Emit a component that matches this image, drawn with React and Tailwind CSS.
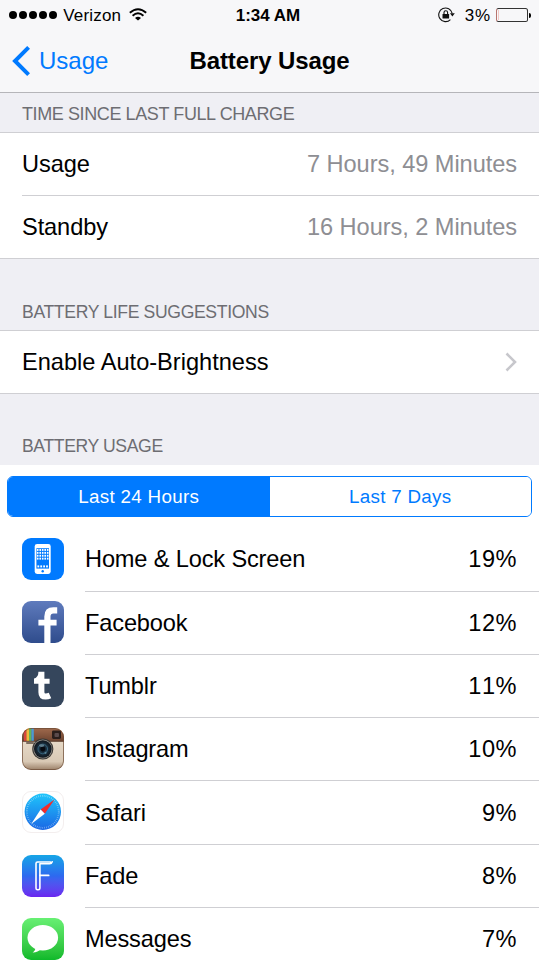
import React, { useState } from "react";

const TILE = "flex w-[42px] h-[42px] shrink-0 overflow-hidden rounded-[9px]";

const HomeIcon = () => (
    <div className={`${TILE} bg-[#007aff]`}>
        <svg viewBox="0 0 42 42" className="w-full h-full">
            <rect x="12.7" y="6" width="16" height="30" rx="2.4" fill="#fff" />
            <rect x="14.4" y="10.2" width="12.6" height="20.4" fill="#007aff" />
            {[0, 1, 2, 3].map((row) =>
                [0, 1, 2, 3, 4].map((col) => (
                    <rect key={`${row}-${col}`} x={14.9 + col * 2.5} y={11 + row * 2.9} width="1.6" height="1.9" fill="#fff" />
                ))
            )}
            {[0, 1, 2, 3].map((col) => (
                <rect key={col} x={15.4 + col * 2.9} y="27.4" width="1.8" height="2" fill="#fff" />
            ))}
            <circle cx="20.7" cy="33.2" r="1.2" fill="#007aff" />
        </svg>
    </div>
);

const FacebookIcon = () => (
    <div className={`${TILE} bg-linear-to-b from-[#5f7bbd] to-[#2f4c8c]`}>
        <svg viewBox="0 0 42 42" className="w-full h-full" fill="none" stroke="#fff" strokeWidth="6.2">
            <path d="M25.4 42V15.6Q25.4 9.4 31.4 9.4H35.2" />
            <path d="M16.4 21.6H34.6" strokeWidth="5.8" />
        </svg>
    </div>
);

const TumblrIcon = () => (
    <div className={`${TILE} bg-[#35465c]`}>
        <svg viewBox="0 0 42 42" className="w-full h-full" fill="none" stroke="#fff" strokeWidth="6">
            <path d="M19.4 6.8V27.2Q19.4 31.6 23.6 31.6 25.8 31.6 28 30.6" />
            <path d="M12 16.3H27.6" strokeWidth="5" />
            <path d="M17 6.8Q16.4 12 12 13.8V16H20Z" fill="#fff" stroke="none" />
        </svg>
    </div>
);

const InstagramIcon = () => (
    <div className={TILE}>
        <svg viewBox="0 0 42 42" className="w-full h-full">
            <defs>
                <linearGradient id="igLeather" x1="0" y1="0" x2="0" y2="1">
                    <stop offset="0" stopColor="#a06a4d" />
                    <stop offset="1" stopColor="#6f4531" />
                </linearGradient>
                <linearGradient id="igBody" x1="0" y1="0" x2="0" y2="1">
                    <stop offset="0" stopColor="#eee3d2" />
                    <stop offset=".8" stopColor="#d9c9b5" />
                    <stop offset="1" stopColor="#9b8068" />
                </linearGradient>
                <radialGradient id="igLens">
                    <stop offset="0" stopColor="#0a0f18" />
                    <stop offset=".45" stopColor="#1c3445" />
                    <stop offset="1" stopColor="#10151c" />
                </radialGradient>
            </defs>
            <rect width="42" height="42" fill="url(#igBody)" />
            <rect width="42" height="13" fill="url(#igLeather)" />
            <rect x="2" width="2.5" height="13" fill="#d9443c" />
            <rect x="4.5" width="2.5" height="13" fill="#f0b83a" />
            <rect x="7" width="2.4" height="13" fill="#62b656" />
            <rect x="9.4" width="2.4" height="13" fill="#4a9bd4" />
            <rect y="12.8" width="42" height="1" fill="#5d3e2d" />
            <rect x="4" y="14.2" width="8" height="1.6" rx=".8" fill="#5a4a3e" />
            <rect x="30" y="2.6" width="9" height="8.4" rx="1.4" fill="#2a1e1b" />
            <rect x="32.5" y="5" width="4.5" height="4" rx="1" fill="#5a4a4b" />
            <circle cx="20.8" cy="21" r="10.6" fill="#3a3835" />
            <circle cx="20.8" cy="21" r="9.5" fill="#96928b" />
            <circle cx="20.8" cy="21" r="8.8" fill="url(#igLens)" />
            <circle cx="20.8" cy="21" r="4.8" fill="none" stroke="#35617a" strokeWidth="1" />
            <circle cx="20.8" cy="21" r="2.4" fill="#06090f" />
            <ellipse cx="19.6" cy="17.6" rx="2.7" ry="1.3" fill="#5f7c8b" />
            <circle cx="23.5" cy="24.8" r="1.1" fill="#557f93" />
            <rect x=".5" y=".5" width="41" height="41" rx="8.5" fill="none" stroke="#6b4a35" strokeOpacity=".7" />
        </svg>
    </div>
);

const SafariIcon = () => (
    <div className={`${TILE} border border-[#f3eeee] bg-white`}>
        <svg viewBox="1 1 40 40" className="w-full h-full">
            <defs>
                <linearGradient id="safariDial" x1="0" y1="0" x2="0" y2="1">
                    <stop offset="0" stopColor="#1fc5fb" />
                    <stop offset="1" stopColor="#1a67e5" />
                </linearGradient>
            </defs>
            <circle cx="20.8" cy="20.8" r="18.2" fill="url(#safariDial)" />
            <circle cx="20.8" cy="20.8" r="16" fill="none" stroke="#fff" strokeOpacity=".5" strokeWidth="1.8" strokeDasharray=".6 1.3" />
            <path d="M32.5 8.5 18.6 18.6 22.8 22.8Z" fill="#f02c2c" />
            <path d="M9.2 33 18.6 18.6 22.8 22.8Z" fill="#fff" />
        </svg>
    </div>
);

const FadeIcon = () => (
    <div className={`${TILE} bg-linear-to-b from-[#16a5e6] via-[#2d69ef] to-[#6a24f0]`}>
        <svg viewBox="0 0 42 42" className="w-full h-full" fill="none" stroke="#fff" strokeWidth="1.6" strokeLinejoin="round" strokeLinecap="round">
            <path d="M30.2 6.8Q29.6 8.8 27.6 8.8H17.9V33.2Q17.9 34.8 16.2 34.8H15.6Q14 34.8 14 33.2V8.4Q14 7 15.6 7H28.4" />
            <path d="M18 20.4H26.6" strokeWidth="1.9" />
        </svg>
    </div>
);

const MessagesIcon = () => (
    <div className={`${TILE} bg-linear-to-b from-[#67f073] to-[#0cb92a]`}>
        <svg viewBox="0 0 42 42" className="w-full h-full">
            <ellipse cx="20.8" cy="19.7" rx="15.3" ry="12.7" fill="#fff" />
            <path d="M13.5 29C13.6 31.5 12.6 33.4 10.6 34.5 14 34.6 17 33.3 18.8 31Z" fill="#fff" />
        </svg>
    </div>
);

const apps = [
    { name: "Home & Lock Screen", percent: 19, Icon: HomeIcon },
    { name: "Facebook", percent: 12, Icon: FacebookIcon },
    { name: "Tumblr", percent: 11, Icon: TumblrIcon },
    { name: "Instagram", percent: 10, Icon: InstagramIcon },
    { name: "Safari", percent: 9, Icon: SafariIcon },
    { name: "Fade", percent: 8, Icon: FadeIcon },
    { name: "Messages", percent: 7, Icon: MessagesIcon },
];

const StatusBar = () => (
    <div className="flex items-center justify-between h-[30px] pl-[9px] pr-[8px] text-[17px] leading-none">
        <div className="flex flex-1 items-center">
            <div className="flex gap-[1.8px]">
                {[0, 1, 2, 3, 4].map((dot) => (
                    <span key={dot} className="w-[8.2px] h-[8.2px] rounded-full bg-black" />
                ))}
            </div>
            <span className="ml-[6px] tracking-[0.2px]">Verizon</span>
            <svg viewBox="0 0 18 13" className="w-[18px] h-[13px] ml-[8px] -mt-px" fill="none" stroke="#000" strokeWidth="1.9">
                <path d="M.8 4.8Q9-2.4 17.2 4.8" />
                <path d="M3.6 7.7Q9 3 14.4 7.7" />
                <path d="M9 12.6 6 9.9Q9 7.6 12 9.9Z" fill="#000" stroke="none" />
            </svg>
        </div>
        <span className="mr-[4px] font-bold">1:34 AM</span>
        <div className="flex flex-1 items-center justify-end">
            <svg viewBox="0 0 17 16" className="w-[17px] h-[16px] mr-px" fill="none" stroke="#111" strokeWidth="1.1">
                <path d="M14.2 6.4A6.8 6.8 0 1 0 12.4 12.6" />
                <path d="M11.9 6.3H16.8L14.4 9.4Z" fill="#111" stroke="none" />
                <rect x="4.5" y="6.9" width="6.6" height="4.7" rx=".5" fill="#111" stroke="none" />
                <path d="M6 7.2V5.5a1.8 1.8 0 0 1 3.6 0V7.2" />
            </svg>
            <span className="ml-[9px] tracking-[0.6px]">3%</span>
            <div className="flex w-[32px] h-[14px] ml-[5.4px] rounded-[2.5px] border border-[#333] border-l-[#b8756f] p-px">
                <span className="w-px bg-[#f3c9c5]" />
            </div>
            <span className="w-[2px] h-[5px] ml-px rounded-r-full bg-black" />
        </div>
    </div>
);

const NavBar = () => (
    <div className="grid grid-cols-[1fr_auto_1fr] items-center h-[62px] px-[12px] text-[24px]">
        <button type="button" className="flex items-center text-[#007aff]">
            <svg viewBox="0 0 18 30" className="w-[18px] h-[30px]" fill="none" stroke="currentColor" strokeWidth="4">
                <path d="M16.6 1.4 3 15 16.6 28.6" />
            </svg>
            <span className="ml-[9px]">Usage</span>
        </button>
        <h1 className="font-bold tracking-[-0.1px]">Battery Usage</h1>
    </div>
);

const SectionTitle = ({ children, className = "" }) => (
    <div className={`flex items-end shrink-0 px-[22px] leading-[20px] text-[#6d6d72] ${className}`}>
        <h2>{children}</h2>
    </div>
);

const TimeRow = ({ label, value }) => (
    <div className="flex flex-1 items-center justify-between">
        <span className="tracking-[-0.1px]">{label}</span>
        <span className="tracking-[-0.06px] text-[#8e8e93]">{value}</span>
    </div>
);

const SegmentedControl = ({ options, active, onChange }) => (
    <div className="flex h-[41px] mx-[7px] overflow-hidden rounded-[6px] border-[1.5px] border-[#007aff] text-[18.8px] tracking-[0.3px]">
        {options.map((option, index) => (
            <button
                key={option}
                type="button"
                onClick={() => onChange(index)}
                className={`flex-1 ${index === active ? "bg-[#007aff] text-white" : "bg-white text-[#007aff]"}`}
            >
                {option}
            </button>
        ))}
    </div>
);

const App = () => {
    const [range, setRange] = useState(0);

    return (
        <div className="flex flex-col w-[539px] h-[960px] overflow-hidden bg-[#efeff4] font-['Liberation_Sans',Arial,sans-serif] text-[23.6px] leading-[28px] text-black">
            <header className="h-[93px] shrink-0 border-b border-[#b5b5b9] bg-[#f7f7f9]">
                <StatusBar />
                <NavBar />
            </header>

            <SectionTitle className="h-[39px] pb-[8px] text-[18px] tracking-[-0.4px]">TIME SINCE LAST FULL CHARGE</SectionTitle>
            <div className="flex flex-col h-[127px] shrink-0 border-y border-[#cfcfd3] bg-white pl-[22px]">
                <div className="flex h-[63px] border-b border-[#cfcfd3] pr-[22px]">
                    <TimeRow label="Usage" value="7 Hours, 49 Minutes" />
                </div>
                <div className="flex flex-1 pr-[22px]">
                    <TimeRow label="Standby" value="16 Hours, 2 Minutes" />
                </div>
            </div>

            <SectionTitle className="h-[71px] pb-[8px] text-[17.6px] tracking-[-0.35px]">BATTERY LIFE SUGGESTIONS</SectionTitle>
            <div className="flex items-center justify-between h-[64px] shrink-0 border-y border-[#cfcfd3] bg-white px-[22px]">
                <span>Enable Auto-Brightness</span>
                <svg viewBox="0 0 12 20" className="w-[12px] h-[20px]" fill="none" stroke="#c7c7cc" strokeWidth="2.6">
                    <path d="M1.5 1.5 10 10 1.5 18.5" />
                </svg>
            </div>

            <SectionTitle className="h-[71px] pb-[9px] text-[17.6px] tracking-[-0.38px]">BATTERY USAGE</SectionTitle>
            <div className="shrink-0 bg-white pt-[11px]">
                <SegmentedControl options={["Last 24 Hours", "Last 7 Days"]} active={range} onChange={setRange} />
                <ul className="mt-[11.3px]">
                    {apps.map(({ name, percent, Icon }) => (
                        <li key={name} className="flex h-[63.3px] items-stretch pl-[22px]">
                            <div className="flex items-center pb-[1.5px]">
                                <Icon />
                            </div>
                            <div className="flex flex-1 items-center justify-between ml-[21px] border-b border-[#cfcfd3] pr-[22px]">
                                <span className="tracking-[-0.15px]">{name}</span>
                                <span className="tracking-[0.5px] [font-kerning:none]">{percent}%</span>
                            </div>
                        </li>
                    ))}
                </ul>
            </div>
        </div>
    );
};

export default App;
